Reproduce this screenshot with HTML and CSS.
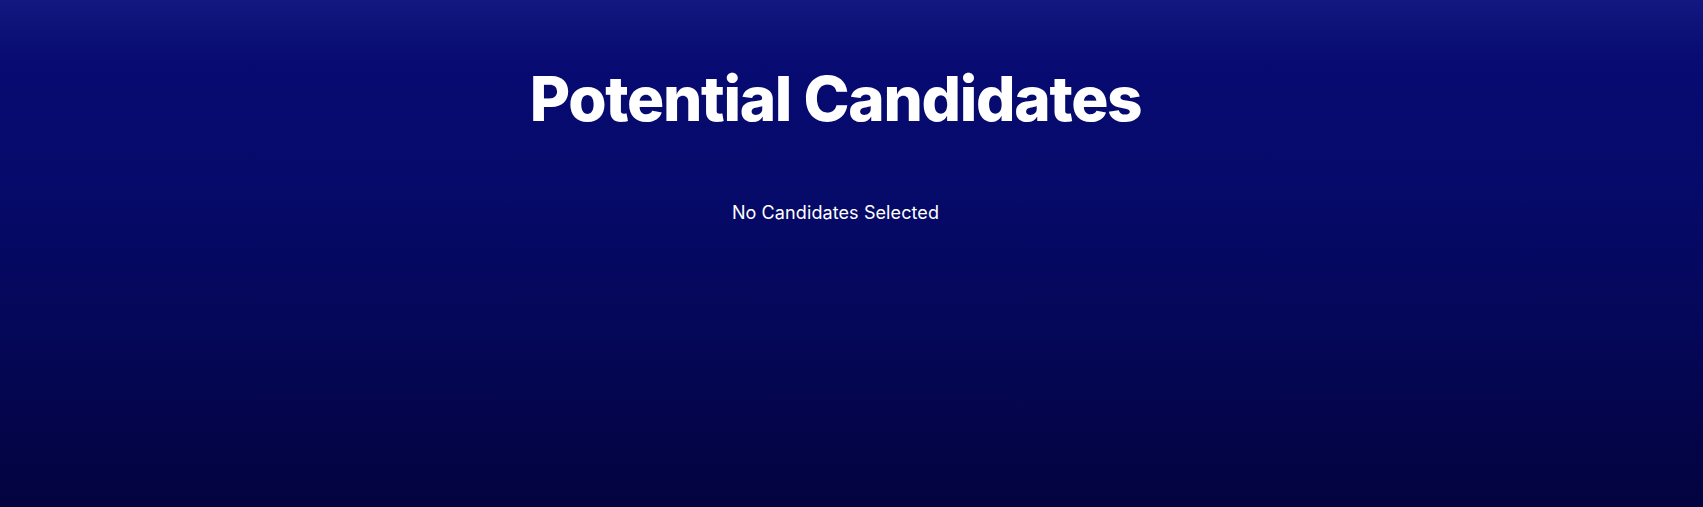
FILE: index.html
```html
<!DOCTYPE html>
<html lang="en">
<head>
<meta charset="utf-8">
<title>Potential Candidates</title>
<link rel="stylesheet" href="styles.css">
</head>
<body>
<main class="page">
  <h1 class="title">Potential Candidates</h1>
  <p class="empty">No Candidates Selected</p>
</main>
</body>
</html>
```

FILE: styles.css
```css
html, body {
  margin: 0;
  padding: 0;
  height: 100%;
}
body {
  font-family: Inter, "Noto Sans", sans-serif;
  color: #ffffff;
  background: linear-gradient(to bottom, #12187f 0px, #070b72 60px, #060a6a 180px, #050758 330px, #03033f 507px);
}
.page {
  min-height: 100%;
  box-sizing: border-box;
  display: flex;
  flex-direction: column;
  align-items: center;
  padding: 0 32px 0 0;
}
.title {
  margin: 62px 0 0;
  font-size: 62px;
  font-weight: 800;
  line-height: 1.2;
  letter-spacing: -1.3px;
}
.empty {
  margin: 63px 0 0;
  font-size: 18px;
  line-height: 28px;
  letter-spacing: 0.1px;
}
```
